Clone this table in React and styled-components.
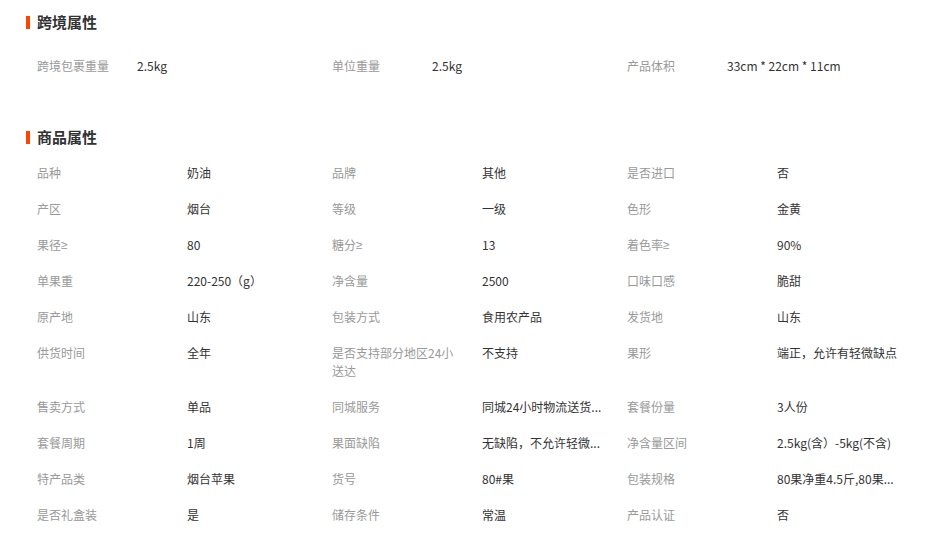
import React from "react";
import styled, { createGlobalStyle } from "styled-components";

const GlobalStyle = createGlobalStyle`
  html, body {
    margin: 0;
    padding: 0;
    background: #fff;
  }
  body {
    font-family: "Noto Sans CJK SC", "Noto Sans", sans-serif;
    font-size: 12px;
    color: #333;
  }
`;

const Page = styled.div`
  width: 928px;
  padding-top: 7px;
`;

const Section = styled.section`
  margin-top: ${(p) => p.$top || 0}px;
`;

const Heading = styled.h3`
  margin: 0;
  padding-left: 26px;
  height: 30px;
  display: flex;
  align-items: center;
  gap: 7px;
  font-size: 15px;
  font-weight: bold;
  color: #333;
  line-height: 30px;
  &::before {
    content: "";
    display: block;
    width: 4px;
    height: 13px;
    background: #ff4400;
  }
`;

const Grid = styled.div`
  margin-top: ${(p) => p.$top || 0}px;
  padding-left: 37px;
  display: grid;
  grid-template-columns: repeat(3, 295px);
`;

const Cell = styled.div`
  display: flex;
  align-items: flex-start;
  padding: 9px 0;
  line-height: 18px;
`;

const Label = styled.div`
  width: ${(p) => p.$w}px;
  padding-right: ${(p) => p.$pr}px;
  box-sizing: border-box;
  flex-shrink: 0;
  color: #999;
`;

const Value = styled.div`
  max-width: 130px;
  color: #333;
  white-space: nowrap;
`;

const Sym = styled.span`
  font-family: "Liberation Sans", "DejaVu Sans", sans-serif;
  line-height: 18px;
  vertical-align: top;
`;

const withSym = (s) => {
  const parts = s.split("≥");
  if (parts.length === 1) return s;
  return (
    <>
      {parts[0]}
      <Sym>≥</Sym>
      {parts[1]}
    </>
  );
};

const crossBorder = [
  ["跨境包裹重量", "2.5kg"],
  ["单位重量", "2.5kg"],
  ["产品体积", "33cm * 22cm * 11cm"],
];

const goods = [
  ["品种", "奶油"],
  ["品牌", "其他"],
  ["是否进口", "否"],
  ["产区", "烟台"],
  ["等级", "一级"],
  ["色形", "金黄"],
  ["果径≥", "80"],
  ["糖分≥", "13"],
  ["着色率≥", "90%"],
  ["单果重", "220-250（g）"],
  ["净含量", "2500"],
  ["口味口感", "脆甜"],
  ["原产地", "山东"],
  ["包装方式", "食用农产品"],
  ["发货地", "山东"],
  ["供货时间", "全年"],
  ["是否支持部分地区24小送达", "不支持"],
  ["果形", "端正，允许有轻微缺点"],
  ["售卖方式", "单品"],
  ["同城服务", "同城24小时物流送货..."],
  ["套餐份量", "3人份"],
  ["套餐周期", "1周"],
  ["果面缺陷", "无缺陷，不允许轻微..."],
  ["净含量区间", "2.5kg(含）-5kg(不含)"],
  ["特产品类", "烟台苹果"],
  ["货号", "80#果"],
  ["包装规格", "80果净重4.5斤,80果..."],
  ["是否礼盒装", "是"],
  ["储存条件", "常温"],
  ["产品认证", "否"],
];

export default function App() {
  return (
    <Page>
      <GlobalStyle />
      <Section>
        <Heading>跨境属性</Heading>
        <Grid $top={11}>
          {crossBorder.map(([k, v]) => (
            <Cell key={k}>
              <Label $w={100} $pr={10}>{k}</Label>
              <Value>{v}</Value>
            </Cell>
          ))}
        </Grid>
      </Section>
      <Section $top={38}>
        <Heading>商品属性</Heading>
        <Grid $top={3}>
          {goods.map(([k, v]) => (
            <Cell key={k}>
              <Label $w={150} $pr={25}>{withSym(k)}</Label>
              <Value>{v}</Value>
            </Cell>
          ))}
        </Grid>
      </Section>
    </Page>
  );
}
